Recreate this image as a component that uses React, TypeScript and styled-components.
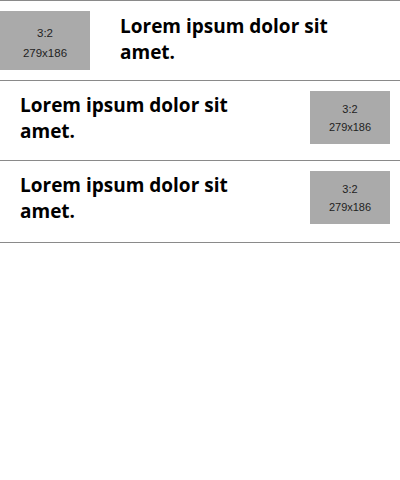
import React from "react";
import styled, { createGlobalStyle } from "styled-components";

const Global = createGlobalStyle`
  html, body { margin: 0; padding: 0; background: #ffffff; }
  body { font-family: "Open Sans", "Liberation Sans", sans-serif; }
`;

const List = styled.div`
  display: flex;
  flex-direction: column;
  width: 400px;
  border-top: 1px solid #8a8a8a;
`;

const Row = styled.div<{ $h: number; $reverse?: boolean; $pad: string; $gap: number }>`
  display: flex;
  flex-direction: ${(p) => (p.$reverse ? "row-reverse" : "row")};
  justify-content: ${(p) => (p.$reverse ? "space-between" : "flex-start")};
  align-items: flex-start;
  gap: ${(p) => p.$gap}px;
  height: ${(p) => p.$h}px;
  padding: ${(p) => p.$pad};
  box-sizing: border-box;
  border-bottom: 1px solid #8a8a8a;
`;

const Thumb = styled.div<{ $w: number; $h: number; $fs: number; $lh: number; $shift: number }>`
  flex: none;
  width: ${(p) => p.$w}px;
  height: ${(p) => p.$h}px;
  box-sizing: border-box;
  padding-top: ${(p) => p.$shift}px;
  background: #aaaaaa;
  display: flex;
  flex-direction: column;
  align-items: center;
  justify-content: center;
  font-family: "Liberation Sans", Arial, sans-serif;
  font-size: ${(p) => p.$fs}px;
  line-height: ${(p) => p.$lh}px;
  color: #1e1e1e;
`;

const Title = styled.h2<{ $top: number }>`
  margin: 0;
  padding-top: ${(p) => p.$top}px;
  width: 240px;
  font-family: "Open Sans", "Liberation Sans", sans-serif;
  font-weight: 700;
  font-size: 19px;
  line-height: 26px;
  color: #000;
`;

export default function App() {
  return (
    <>
      <Global />
      <List>
        <Row $h={80} $pad="10px 0 0 0" $gap={30}>
          <Thumb $w={90} $h={59} $fs={11.5} $lh={20} $shift={4}>
            <span>3:2</span>
            <span>279x186</span>
          </Thumb>
          <Title $top={2}>Lorem ipsum dolor sit amet.</Title>
        </Row>
        <Row $h={80} $pad="10px 10px 0 20px" $gap={10} $reverse>
          <Thumb $w={80} $h={53} $fs={11} $lh={18} $shift={1}>
            <span>3:2</span>
            <span>279x186</span>
          </Thumb>
          <Title $top={1}>Lorem ipsum dolor sit amet.</Title>
        </Row>
        <Row $h={82} $pad="10px 10px 0 20px" $gap={10} $reverse>
          <Thumb $w={80} $h={53} $fs={11} $lh={18} $shift={1}>
            <span>3:2</span>
            <span>279x186</span>
          </Thumb>
          <Title $top={1}>Lorem ipsum dolor sit amet.</Title>
        </Row>
      </List>
    </>
  );
}
